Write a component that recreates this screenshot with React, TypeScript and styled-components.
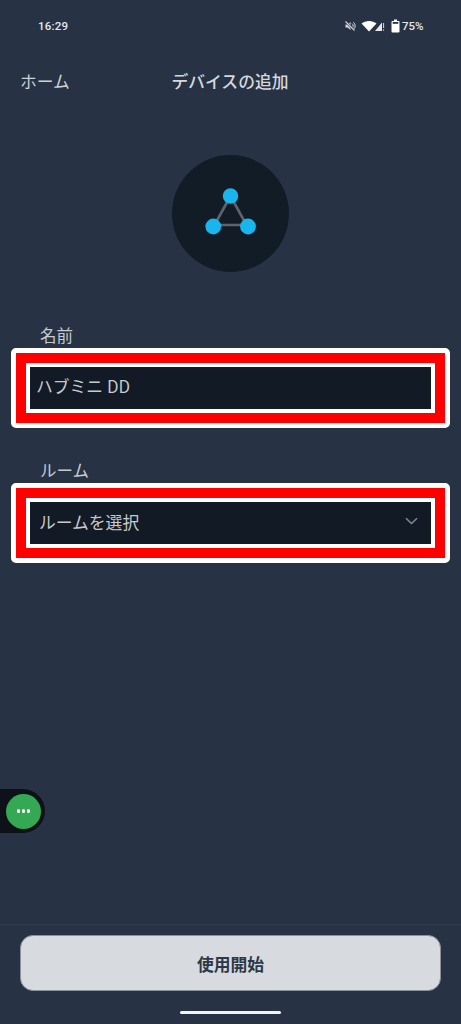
import styled, { createGlobalStyle } from 'styled-components';

const GlobalStyle = createGlobalStyle`
  html, body {
    margin: 0;
    padding: 0;
    background: #273344;
  }
  * {
    box-sizing: border-box;
  }
`;

function MuteIcon() {
  return (
    <svg width="12" height="12" viewBox="0 0 12 12">
      <path d="M1.5 4.5h2L6.5 2v8l-3-2.5h-2z" fill="#d5d9de" />
      <path d="M8 3.6c1.5 1 1.5 3.8 0 4.8M9.3 2.2c2.4 1.8 2.4 5.800 0 7.600" fill="none" stroke="#d5d9de" strokeWidth="1" />
      <path d="M1.5 1.5l9 9" stroke="#273344" strokeWidth="2.4" />
      <path d="M1.5 1.5l9 9" stroke="#d5d9de" strokeWidth="1.1" />
    </svg>
  );
}

function WifiIcon() {
  return (
    <svg width="16" height="12" viewBox="0 0 16 12">
      <path d="M0.5 3.6C4.6 0.2 11.4 0.2 15.5 3.6L8 11.5z" fill="#fff" />
    </svg>
  );
}

function SignalIcon() {
  return (
    <svg width="10" height="12" viewBox="0 0 10 12">
      <path d="M7 2.5V11H0z" fill="#e6e8eb" />
      <path d="M8.6 3v5M8.6 9.4v1.4" stroke="#d5d9de" strokeWidth="1" />
    </svg>
  );
}

function BatteryIcon() {
  return (
    <svg width="9" height="14" viewBox="0 0 9 14">
      <path d="M3 .5h3V2h1.6c.5 0 .9.4.9.9v9.7c0 .5-.4.9-.9.9H1.400c-.5 0-.9-.4-.9-.9V2.900c0-.5.4-.9.9-.9H3z" fill="#fff" />
      <rect x="1.700" y="3" width="5.600" height="1.800" fill="#273344" />
    </svg>
  );
}

const HubSvg = styled.svg`
  margin-bottom: 4px;
`;

function HubIcon() {
  return (
    <HubSvg width="52" height="48" viewBox="0 0 52 48">
      <path d="M25.500 8L9.500 37h32z" fill="none" stroke="#5f646c" strokeWidth="2.600" />
      <circle cx="25.500" cy="8" r="7.700" fill="#18b6ec" />
      <circle cx="8.300" cy="38.500" r="7.900" fill="#18b6ec" />
      <circle cx="43" cy="38.500" r="7.900" fill="#18b6ec" />
    </HubSvg>
  );
}

const Chevron = styled.svg`
  margin-bottom: 4px;
`;

function ChevronIcon() {
  return (
    <Chevron width="13" height="8" viewBox="0 0 13 8">
      <path d="M1 1.200l5.500 5.300L12 1.200" fill="none" stroke="#858a92" strokeWidth="1.500" />
    </Chevron>
  );
}

export default function App() {
  return (
    <Page>
      <GlobalStyle />
      <StatusBar>
        <Time>16:29</Time>
        <StatusIcons>
          <MuteIcon />
          <WifiGroup>
            <WifiIcon />
            <SignalIcon />
          </WifiGroup>
          <BatteryGroup>
            <BatteryIcon />
            <Percent>75%</Percent>
          </BatteryGroup>
        </StatusIcons>
      </StatusBar>

      <Header>
        <BackLink>ホーム</BackLink>
        <Title>デバイスの追加</Title>
      </Header>

      <IconCircle>
        <HubIcon />
      </IconCircle>

      <Form>
        <FieldGroup>
          <Label>名前</Label>
          <WhiteFrame>
            <RedFrame>
              <Field>
                <NameText>ハブミニ DD</NameText>
              </Field>
            </RedFrame>
          </WhiteFrame>
        </FieldGroup>
        <FieldGroup>
          <Label>ルーム</Label>
          <WhiteFrame>
            <RedFrame>
              <Field>
                <RoomText>ルームを選択</RoomText>
                <ChevronIcon />
              </Field>
            </RedFrame>
          </WhiteFrame>
        </FieldGroup>
      </Form>

      <AssistBubble>
        <AssistDot>
          <Dot />
          <Dot />
          <Dot />
        </AssistDot>
      </AssistBubble>

      <Footer>
        <StartButton>使用開始</StartButton>
        <HomeIndicator />
      </Footer>
    </Page>
  );
}

const Page = styled.div`
  position: relative;
  display: flex;
  flex-direction: column;
  width: 461px;
  height: 1024px;
  overflow: hidden;
  background: #273344;
  font-family: 'Noto Sans CJK JP', 'Noto Sans', sans-serif;
`;

const StatusBar = styled.div`
  display: flex;
  align-items: center;
  justify-content: space-between;
  height: 52px;
  padding: 0 38px;
  color: #e4e7ea;
  font-family: Roboto, sans-serif;
  font-size: 11.500px;
  font-weight: 500;
`;

const Time = styled.span`
  letter-spacing: 0.2px;
`;

const StatusIcons = styled.div`
  display: flex;
  align-items: center;
  gap: 6px;
`;

const WifiGroup = styled.div`
  display: flex;
  align-items: center;
  margin-left: -1px;
  & > svg + svg {
    margin-left: -2px;
  }
`;

const BatteryGroup = styled.div`
  display: flex;
  align-items: center;
  gap: 2px;
`;

const Percent = styled.span`
  width: 21px;
`;

const Header = styled.div`
  position: relative;
  display: flex;
  align-items: center;
  justify-content: center;
  height: 58px;
`;

const BackLink = styled.span`
  position: absolute;
  left: 20px;
  color: #ccd0d5;
  font-size: 16.800px;
`;

const Title = styled.h1`
  margin: 0 0 0 -1px;
  color: #d5d8dc;
  font-size: 16.800px;
  font-weight: 500;
`;

const IconCircle = styled.div`
  display: flex;
  align-items: center;
  justify-content: center;
  align-self: center;
  width: 117px;
  height: 117px;
  margin-top: 45px;
  border-radius: 50%;
  background: #121c27;
`;

const Form = styled.div`
  display: flex;
  flex-direction: column;
  gap: 29px;
  margin-top: 50px;
  padding: 0 11px;
`;

const FieldGroup = styled.div`
  display: flex;
  flex-direction: column;
`;

const Label = styled.label`
  height: 26px;
  padding-left: 29px;
  color: #c6cace;
  font-size: 16.500px;
  line-height: 26px;
`;

const WhiteFrame = styled.div`
  border: 5px solid #fff;
  border-radius: 5px;
`;

const RedFrame = styled.div`
  border: 10px solid #fe0000;
`;

const Field = styled.div`
  display: flex;
  align-items: center;
  justify-content: space-between;
  height: 50px;
  padding: 0 13px 0 6px;
  border: 4px solid #fff;
  background: #121a25;
`;

const NameText = styled.span`
  padding-bottom: 5px;
  color: #c6cace;
  font-size: 16.800px;
`;

const RoomText = styled.span`
  padding: 0 0 2px 3px;
  color: #c6cace;
  font-size: 16.800px;
`;

const AssistBubble = styled.div`
  position: absolute;
  top: 789px;
  left: 0;
  display: flex;
  align-items: center;
  width: 45px;
  height: 44px;
  padding-left: 6px;
  border-radius: 0 22px 22px 0;
  background: #0d1219;
`;

const AssistDot = styled.div`
  display: flex;
  align-items: center;
  justify-content: center;
  gap: 1.500px;
  width: 35px;
  height: 35px;
  border-radius: 50%;
  background: #34a853;
`;

const Dot = styled.span`
  width: 3.500px;
  height: 3.500px;
  border-radius: 50%;
  background: #fff;
`;

const Footer = styled.div`
  display: flex;
  flex-direction: column;
  align-items: center;
  margin-top: auto;
  height: 100px;
  padding: 10px 20px 0;
  border-top: 1px solid #303d4e;
`;

const StartButton = styled.button`
  width: 421px;
  height: 56px;
  padding: 1px 0 0;
  border: 1px solid #8a919b;
  border-radius: 13px;
  background: #d7dbdf;
  color: #2c3848;
  font-family: inherit;
  font-size: 16.800px;
  font-weight: 700;
`;

const HomeIndicator = styled.div`
  width: 101px;
  height: 3px;
  margin-top: 20px;
  border-radius: 2px;
  background: #f2f3f5;
`;
